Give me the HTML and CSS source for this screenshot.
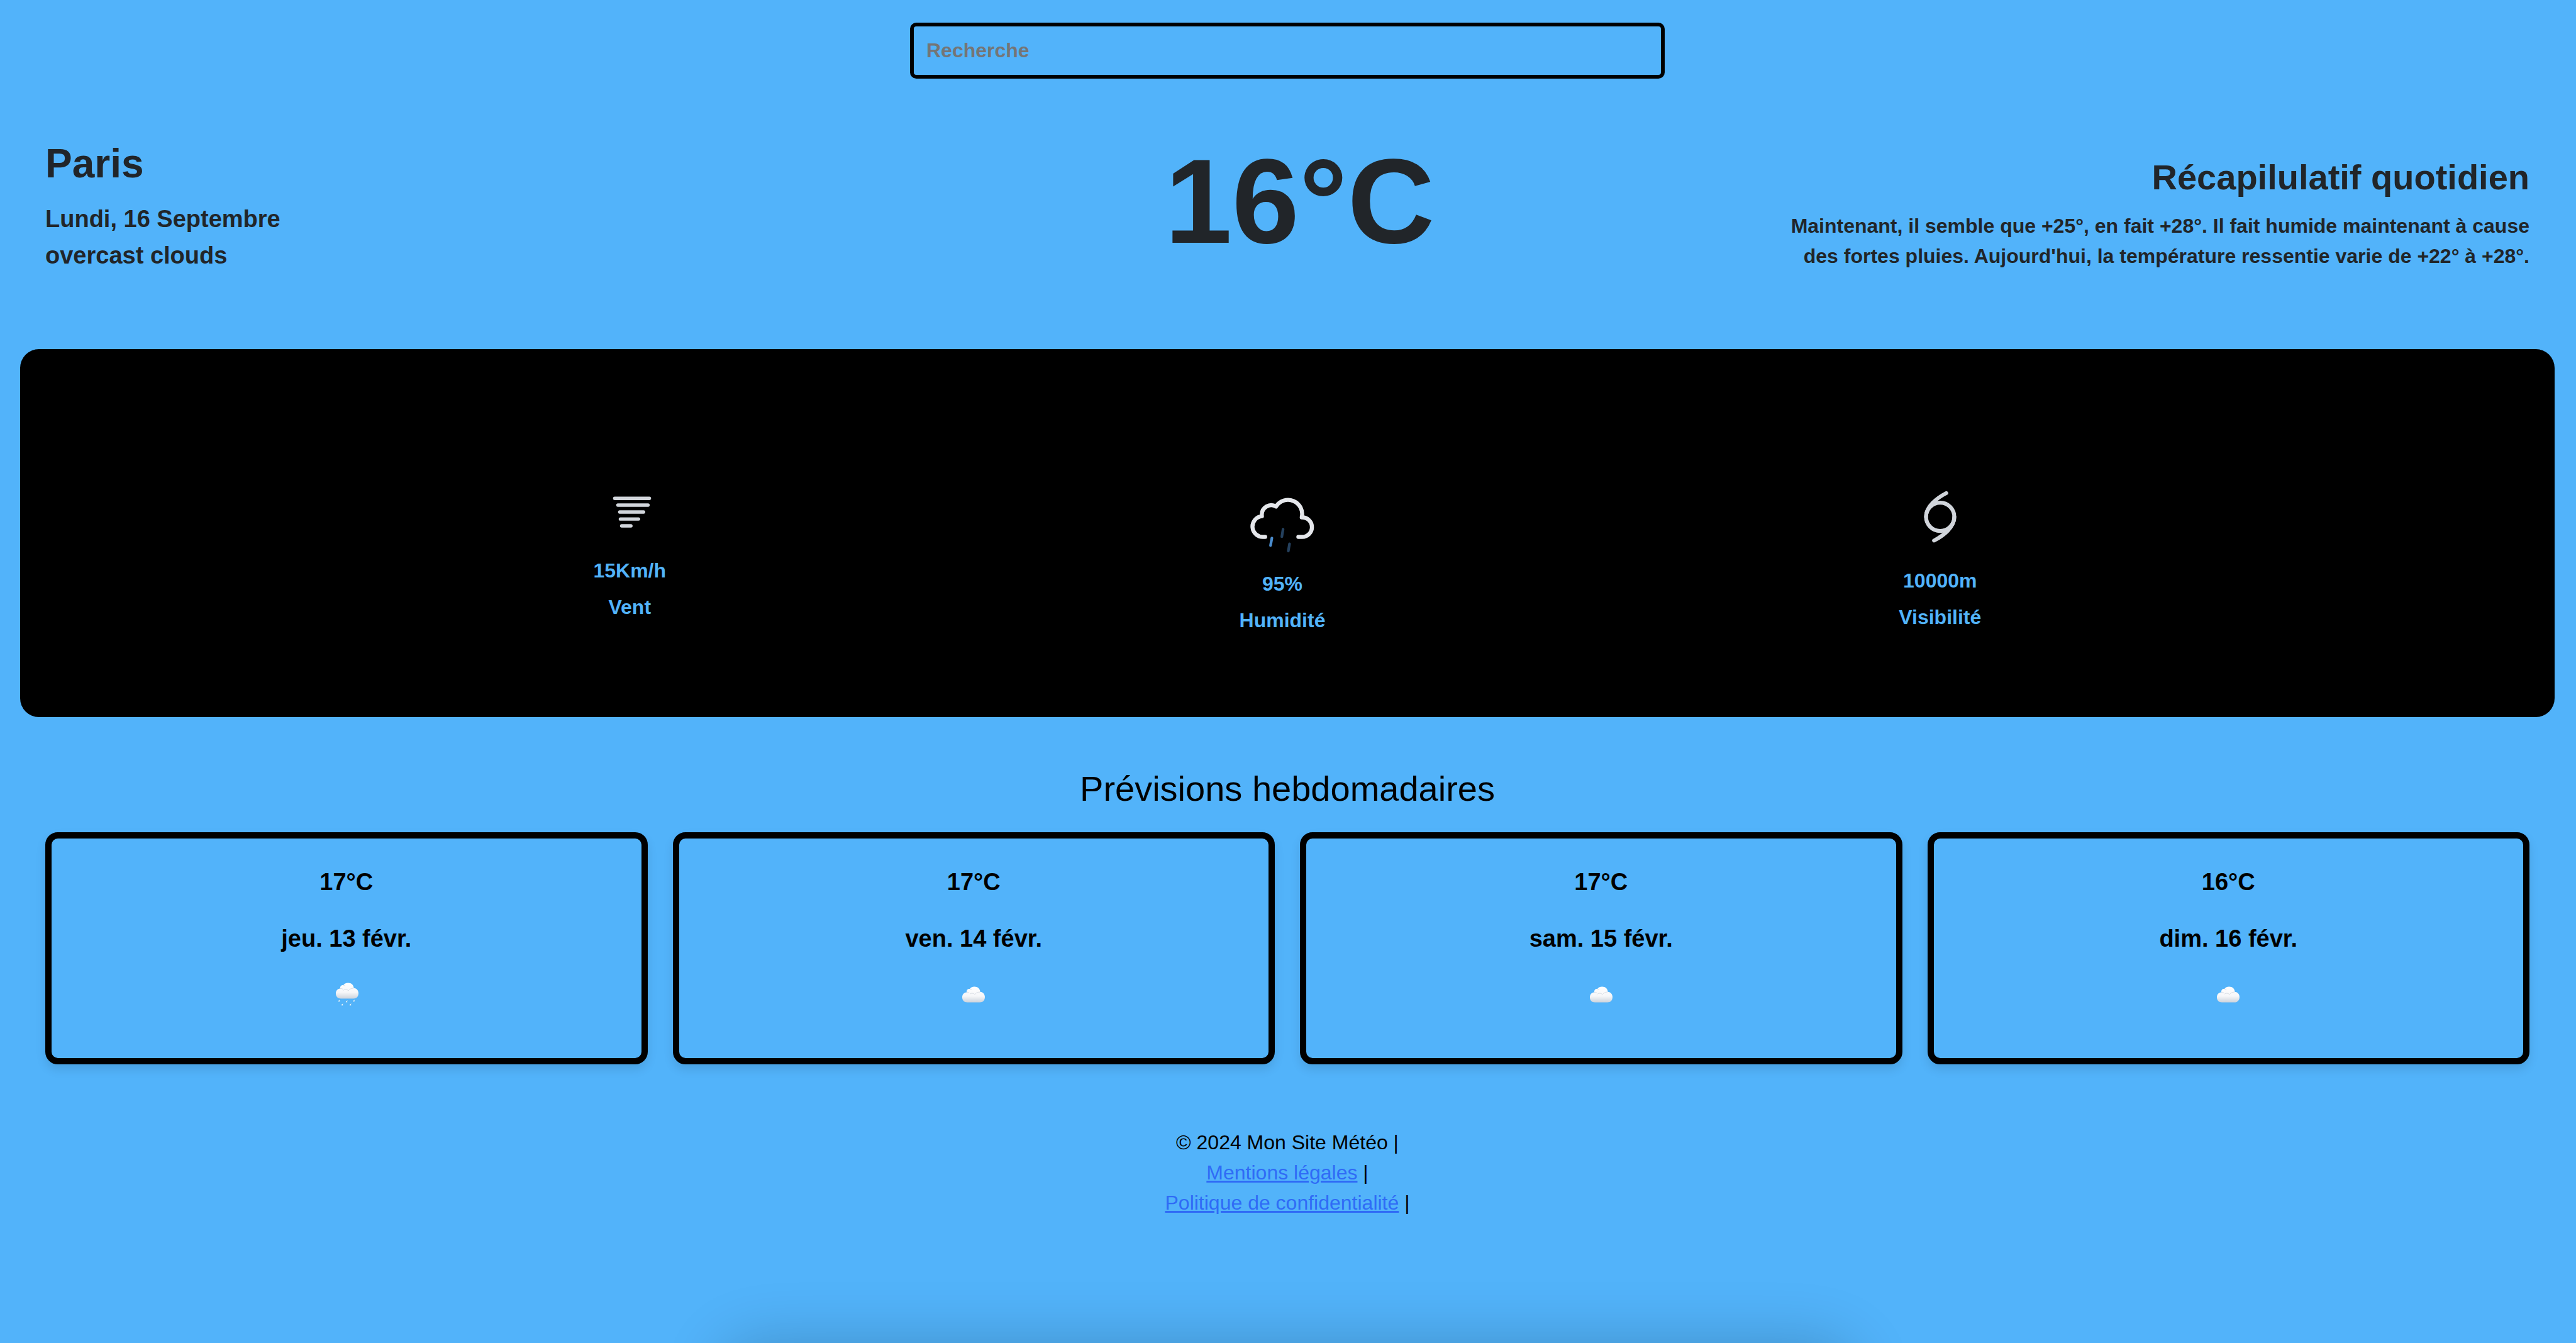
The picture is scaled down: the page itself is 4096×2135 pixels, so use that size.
FILE: index.html
```html
<!DOCTYPE html>
<html lang="fr">
<head>
<meta charset="utf-8">
<title>Météo</title>
<link rel="stylesheet" href="styles.css">
</head>
<body>
<svg class="defs" aria-hidden="true">
  <defs>
    <linearGradient id="puff" x1="0" y1="0" x2="0" y2="1">
      <stop offset="0" stop-color="#ffffff"/>
      <stop offset="0.6" stop-color="#f6f7f9"/>
      <stop offset="1" stop-color="#ccd3dc"/>
    </linearGradient>
    <symbol id="cloud" viewBox="0 0 38 26">
      <path fill="url(#puff)" d="M9 25.500C4 25.500 1 22 1 17.500C1 13 3.500 9.700 8 9.500C7.500 6 10 3.500 13 4.200C14 2 17 0.500 20.500 0.500C25.500 0.500 29.500 4 29.500 8.700C34 9 37 12.500 37 17C37 22 34 25.500 29 25.500Z"/>
      <path fill="none" stroke="#d9dee5" stroke-width="1" d="M13 12.500C15 10.500 19 10.500 21 13C23 10 26 9 29 9.200M8 9.500C9.500 9 11 9.500 12 10.500M13 4.200C14.500 4.500 15.500 5 16 6"/>
    </symbol>
  </defs>
</svg>

<header class="search">
  <input class="search-input" type="text" placeholder="Recherche" aria-label="Recherche">
</header>

<main>
  <section class="current">
    <div class="city">
      <h1 class="city-name">Paris</h1>
      <p class="city-line">Lundi, 16 Septembre</p>
      <p class="city-line">overcast clouds</p>
    </div>
    <p class="temperature">16°C</p>
    <div class="summary">
      <h2 class="summary-title">Récapilulatif quotidien</h2>
      <p class="summary-text">Maintenant, il semble que +25°, en fait +28°. Il fait humide maintenant à cause des fortes pluies. Aujourd'hui, la température ressentie varie de +22° à +28°.</p>
    </div>
  </section>

  <section class="details">
    <div class="detail wind">
      <svg class="detail-icon" viewBox="0 0 64 64" fill="none" stroke="#d1d5db" stroke-width="3" stroke-linecap="round" aria-hidden="true">
        <path d="M19 20.500H49.400M21.800 26.500H48.200M23.400 32.600H44.300M24 38.700H39.900M25.100 44.700H33.200"/>
      </svg>
      <p class="detail-text">15Km/h</p>
      <p class="detail-text">Vent</p>
    </div>
    <div class="detail humidity">
      <svg class="detail-icon" viewBox="0 0 64 64" fill="none" stroke-linecap="round" aria-hidden="true">
        <path stroke="#e5e7eb" stroke-width="3" stroke-linejoin="round" d="M43.670 46h2.830a7.250 7.250 0 0 0 0-14.500h-.32a10.490 10.490 0 0 0-19.110-8a7 7 0 0 0-10.570 6a7.210 7.210 0 0 0 .1 1.140A7.700 7.700 0 0 0 18 46h1"/>
        <g stroke-width="2">
          <path stroke="#4a8ccd" d="M24 46.900L23 52.400"/>
          <path stroke="#24405d" d="M32.300 40.300L31.400 45.800M37.100 51.200L36.200 56.500"/>
        </g>
      </svg>
      <p class="detail-text">95%</p>
      <p class="detail-text">Humidité</p>
    </div>
    <div class="detail visibility">
      <svg class="detail-icon" viewBox="0 0 64 64" fill="none" stroke="#d1d5db" stroke-width="3" stroke-linecap="round" aria-hidden="true">
        <circle cx="32" cy="32.300" r="10.900"/>
        <path d="M36.700 14C29.500 17.800 21 24.300 21.100 32.300M27.300 50.600C34.500 46.800 43 40.300 42.900 32.300"/>
      </svg>
      <p class="detail-text">10000m</p>
      <p class="detail-text">Visibilité</p>
    </div>
  </section>

  <section class="forecast">
    <h2 class="forecast-title">Prévisions hebdomadaires</h2>
    <div class="cards">
      <article class="card">
        <p>17°C</p>
        <p>jeu. 13 févr.</p>
        <svg class="card-icon" viewBox="0 0 60 60" aria-hidden="true">
          <use href="#cloud" x="12" y="10" width="38" height="26"/>
          <path fill="#d9f1ff" stroke="#3d9be0" stroke-width="0.500" d="M20 36.500l-.6 3.500a1.500 1.500 0 0 1-2.700-1.300zM32 37.500l-.6 3.500a1.500 1.500 0 0 1-2.700-1.300zM43.500 36.500l-.6 3.500a1.500 1.500 0 0 1-2.700-1.300zM25 42.500l-.6 3.500a1.500 1.500 0 0 1-2.700-1.300zM38 42.500l-.6 3.500a1.500 1.500 0 0 1-2.700-1.300z"/>
        </svg>
      </article>
      <article class="card">
        <p>17°C</p>
        <p>ven. 14 févr.</p>
        <svg class="card-icon" viewBox="0 0 60 60" aria-hidden="true"><use href="#cloud" x="11" y="16" width="38" height="26"/></svg>
      </article>
      <article class="card">
        <p>17°C</p>
        <p>sam. 15 févr.</p>
        <svg class="card-icon" viewBox="0 0 60 60" aria-hidden="true"><use href="#cloud" x="11" y="16" width="38" height="26"/></svg>
      </article>
      <article class="card">
        <p>16°C</p>
        <p>dim. 16 févr.</p>
        <svg class="card-icon" viewBox="0 0 60 60" aria-hidden="true"><use href="#cloud" x="11" y="16" width="38" height="26"/></svg>
      </article>
    </div>
  </section>
</main>

<footer class="footer">
  <p>© 2024 Mon Site Météo |</p>
  <p><a href="#mentions">Mentions légales</a> |</p>
  <p><a href="#confidentialite">Politique de confidentialité</a> |</p>
</footer>
<div class="bottom-shade" aria-hidden="true"></div>
</body>
</html>
```
FILE: styles.css
```css
* {
  box-sizing: border-box;
}

body {
  margin: 0;
  padding: 36px 2px 0 0;
  min-height: 100vh;
  background: #52b3fa;
  color: #212529;
  font-family: "Liberation Sans", Arial, sans-serif;
  font-size: 32px;
  line-height: 48px;
}

h1, h2, p {
  margin: 0;
}

.defs {
  position: absolute;
  width: 0;
  height: 0;
}

.search {
  display: flex;
  justify-content: center;
}

.search-input {
  width: 1200px;
  max-width: 90%;
  padding: 20px;
  border: 6px solid #000;
  border-radius: 10px;
  background: transparent;
  color: #000;
  font: bold 32px/37px "Liberation Sans", Arial, sans-serif;
  outline: none;
}

.search-input::placeholder {
  color: #757575;
  opacity: 1;
}

.current {
  display: grid;
  grid-template-columns: 31fr 39fr 30fr;
  align-items: end;
  padding: 80px 72px 0;
  font-weight: bold;
}

.city-name {
  margin-bottom: 20px;
  font-size: 64px;
  line-height: 77px;
}

.city-line {
  font-size: 38px;
  line-height: 58px;
}

.temperature {
  text-align: center;
  font-size: 192px;
  line-height: 230px;
}

.summary {
  padding-bottom: 4px;
  text-align: right;
}

.summary-title {
  margin-bottom: 20px;
  font-size: 56px;
  line-height: 67px;
}

.details {
  display: flex;
  justify-content: space-evenly;
  align-items: flex-start;
  margin: 120px 32px 0;
  padding: 200px 0 130px;
  border-radius: 30px;
  background: #000;
  color: #52b3fa;
  font-weight: bold;
}

.detail {
  display: flex;
  flex-direction: column;
  align-items: center;
  gap: 10px;
}

.detail-icon {
  display: block;
  margin-bottom: 2px;
  aspect-ratio: 1;
}

.wind .detail-icon {
  width: 116px;
}

.humidity .detail-icon {
  width: 137px;
}

.visibility .detail-icon {
  width: 132px;
}

.forecast {
  padding: 80px 72px 0;
  color: #000;
  text-align: center;
}

.forecast-title {
  margin-bottom: 36px;
  font-size: 56px;
  font-weight: normal;
  line-height: 67px;
}

.cards {
  display: grid;
  grid-template-columns: repeat(4, 1fr);
  gap: 40px;
}

.card {
  display: flex;
  flex-direction: column;
  align-items: center;
  gap: 30px;
  padding: 39px 20px 70px;
  border: 10px solid #000;
  border-radius: 20px;
  box-shadow: 0 8px 16px rgba(0, 0, 0, 0.1);
  font-size: 38px;
  font-weight: bold;
  line-height: 60px;
}

.card-icon {
  width: 60px;
  height: 60px;
}

.footer {
  padding: 100px 72px 0;
  color: #000;
  text-align: center;
}

.footer a {
  color: #2f6bf6;
}

/* soft shade rising from under the lower edge of the window */
.bottom-shade {
  position: fixed;
  right: 28%;
  bottom: -200px;
  left: 28%;
  height: 200px;
  border-radius: 60px;
  box-shadow: 0 0 100px rgba(0, 0, 0, 0.2);
  pointer-events: none;
}
```
